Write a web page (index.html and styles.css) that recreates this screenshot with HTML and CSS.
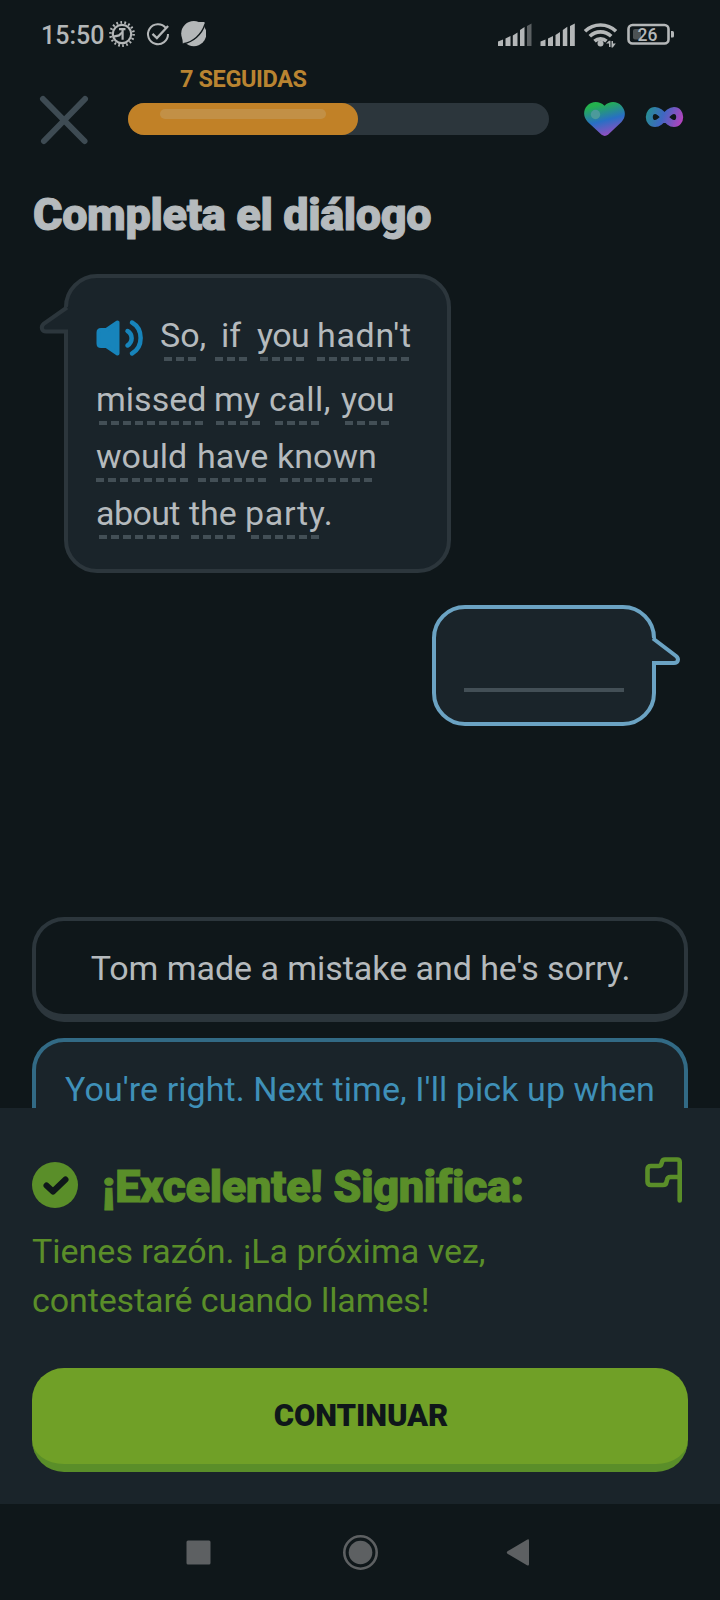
FILE: index.html
```html
<!DOCTYPE html>
<html lang="es">
<head>
<meta charset="utf-8">
<title>Completa el diálogo</title>
<link rel="stylesheet" href="styles.css">
</head>
<body>
<div class="screen">
  <header class="status">
    <span class="clock">15:50</span>
    <svg class="status-left" width="100" height="32" viewBox="106 18 100 32" fill="none" stroke="#b4b7b8">
      <circle cx="122" cy="34" r="9.2" stroke-width="2.2"/>
      <circle cx="122" cy="34" r="11.6" stroke-width="2.6" stroke-dasharray="1.7 2.35"/>
      <path d="M119 29.2h6.500M122.600 29.200v10.500" stroke-width="2.200"/>
      <path d="M113.500 36.600l5.500-1.200 3.400-3.200" stroke-width="2.200"/>
      <path d="M165.8 27.9a10 10 0 1 0 2.2 6.1" stroke-width="2"/>
      <path d="M152.500 33.800l4.400 4.200 11.200-12" stroke-width="2.300"/>
      <circle cx="193.800" cy="33.600" r="12.600" fill="#b4b7b8" stroke="none"/>
      <path d="M198 22l6.500 0 .3 6zM182.300 37l.5 6.500 6.500-1z" fill="#b4b7b8" stroke="none"/>
      <path d="M183.500 43.800c9-2 18-8.500 21.500-19.500" stroke="#0f171a" stroke-width="1.400"/>
    </svg>
    <svg class="status-right" width="184" height="32" viewBox="494 18 184 32" fill="#b4b7b8">
      <path d="M498 41.500l5-2V46h-5zM505.500 38.500l5-2.500v10h-5zM512.800 35.500l4.700-3V46h-4.700zM520 30l4.500-3V46H520z"/>
      <path d="M527 26l4.500-2.500V46H527z" fill="#5b6062"/>
      <path d="M540.500 41.500l5-2V46h-5zM548 38.500l5-2.500v10h-5zM555.500 35l4.500-3V46h-4.500zM562.800 30l4.500-3.200V46h-4.500zM570 26l4.800-2.500V46H570z"/>
      <g fill="none" stroke="#b4b7b8" stroke-width="3.600">
        <path d="M585 31.200a22.500 22.500 0 0 1 31 0M589.800 36.200a15.500 15.500 0 0 1 21.400 0M594.500 41.200a9 9 0 0 1 12 0"/>
      </g>
      <circle cx="600.500" cy="43.500" r="3"/>
      <path d="M606 43.500l3-2.800h1.500V47H609v-3.500zM615.800 43.500l-3 4h-1.300V41h1.500v2.500z"/>
      <rect x="628.500" y="25" width="40" height="18.500" rx="4" fill="none" stroke="#b4b7b8" stroke-width="2.600"/>
      <rect x="633" y="29" width="8" height="10.500" rx="2" fill="#4c5254"/>
      <path d="M671 31h1.500a1.500 1.500 0 0 1 1.500 1.500v3.500a1.500 1.500 0 0 1-1.500 1.500H671z"/>
      <text class="battery" x="637.500" y="40.500">26</text>
    </svg>
  </header>

  <div class="top">
    <svg class="close" width="56" height="56" viewBox="36 92 56 56" fill="none" stroke="#3e4b53" stroke-width="6" stroke-linecap="round"><path d="M43 99l41.500 42M85 99l-41 42"/></svg>
    <div class="progress-wrap">
      <div class="streak">7 SEGUIDAS</div>
      <div class="progress"><div class="fill"><div class="shine"></div></div></div>
    </div>
    <svg class="badges" width="110" height="48" viewBox="580 96 110 48">
      <defs>
        <linearGradient id="hg" x1=".3" y1="0" x2=".62" y2="1"><stop offset=".08" stop-color="#24b24e"/><stop offset=".55" stop-color="#286fc4"/><stop offset="1" stop-color="#9b4cc0"/></linearGradient>
        <linearGradient id="ig" gradientUnits="userSpaceOnUse" x1="646" y1="110" x2="683" y2="124"><stop offset="0" stop-color="#24918f"/><stop offset=".45" stop-color="#3f67c2"/><stop offset="1" stop-color="#bf40bd"/></linearGradient>
      </defs>
      <path fill="url(#hg)" d="M604.500 105.800c5-5 12.500-4.800 17 0 4.500 5 4.500 11.500 0 16.200l-13.500 12.800q-3.200 2.300-6.400 0L587.800 122c-4.500-4.700-5-11.500-.6-16.200 4.500-4.800 12.300-5 17.300 0z"/>
      <circle cx="595.500" cy="114.500" r="4.700" fill="#4c9a9b"/>
      <path d="M664.500 117c-3.600-4-6-6.600-9.500-6.600-3.500 0-5.700 3-5.700 6.600s2.200 6.600 5.700 6.600c3.500 0 5.900-2.600 9.500-6.600s6-6.600 9.500-6.600c3.500 0 5.700 3 5.700 6.600s-2.200 6.600-5.700 6.600c-3.500 0-5.900-2.600-9.500-6.600z" fill="none" stroke="url(#ig)" stroke-width="7"/>
    </svg>
  </div>

  <main class="lesson">
    <h1 class="title">Completa el diálogo</h1>
    <div class="bubble bubble-in">
      <svg class="tail tail-in" width="32" height="36" viewBox="38 302 32 36"><path d="M70 305.500L66 308 44 323.500c-4 3.500-2 8 2 8h20.500H70z" fill="#1a242a"/><path d="M67 307.500L44 323.500c-4 3.500-2 8 2 8h22" fill="none" stroke="#2c363c" stroke-width="4"/></svg>
      <div class="line line-first">
        <svg class="speaker" width="48" height="38" viewBox="96 319 48 38" fill="none" stroke="#1784bb" stroke-width="4.500" stroke-linecap="round"><path d="M101 330h5.500l11-7.500v31L106.500 346H101q-2.500 0-2.500-2.500v-11q0-2.500 2.500-2.500z" fill="#1784bb" stroke-width="4" stroke-linejoin="round"/><path d="M127.500 331c5.500 3.500 5.500 11 0 14.500M132 322.500c11.500 6.500 11.500 24.500 0 31"/></svg>
        <span class="word w-so">So,</span><span class="word w-if">if</span><span class="word w-you1">you</span><span class="word w-hadnt">hadn't</span>
      </div>
      <div class="line"><span class="word w-missed">missed</span><span class="word w-my">my</span><span class="word w-call">call,</span><span class="word w-you2">you</span></div>
      <div class="line line-third"><span class="word w-would">would</span><span class="word w-have">have</span><span class="word w-known">known</span></div>
      <div class="line"><span class="word w-about">about</span><span class="word w-the">the</span><span class="word w-party">party.</span></div>
    </div>
    <div class="bubble bubble-out">
      <svg class="tail tail-out" width="32" height="36" viewBox="650 634 32 36"><path d="M650 636.500l4 3 22 16.500c3.500 3 2 7-2 7h-20H650z" fill="#1a242a"/><path d="M653 638.500L676 656c3.500 3 2 7-2 7h-22" fill="none" stroke="#6ba3c3" stroke-width="4"/></svg>
      <div class="blank"></div>
    </div>
    <div class="options">
      <button class="option"><span class="opt-a">Tom made a mistake and he's sorry.</span></button>
      <button class="option selected"><span class="opt-b">You're right. Next time, I'll pick up when</span></button>
    </div>
  </main>

  <section class="feedback">
    <div class="feedback-head">
      <svg width="46" height="46" viewBox="0 0 46 46"><circle cx="23" cy="23" r="23" fill="#5a8e29"/><path d="M14.500 23.500l6.500 6 12.500-12" fill="none" stroke="#0f171a" stroke-width="6" stroke-linecap="round" stroke-linejoin="round"/></svg>
      <h2>¡Excelente! Significa:</h2>
      <svg class="flag" width="38" height="48" viewBox="645 1157 38 48" fill="none" stroke="#5a8e29" stroke-width="4.600" stroke-linecap="round" stroke-linejoin="round"><path d="M679.700 1200.500V1162q0-2.500-2.500-2.500H665q-2.500 0-3 2.500l-.5 1.500q-.5 2.500-3 2.500H651q-3.500 0-3.500 3.500v12q0 3.500 3.500 3.500h12q3 0 3.500-3l.5-2q.5-3 3.500-3h9"/></svg>
    </div>
    <p class="translation"><span class="tr-a">Tienes razón. ¡La próxima vez,</span><br><span class="tr-b">contestaré cuando llames!</span></p>
    <button class="continue"><span>CONTINUAR</span></button>
  </section>

  <nav class="nav">
    <svg width="720" height="96" viewBox="0 1504 720 96" fill="#5d6062"><rect x="186.500" y="1540.500" width="24" height="24" rx="1.500"/><circle cx="360.500" cy="1552.500" r="11.800"/><circle cx="360.500" cy="1552.500" r="16.200" fill="none" stroke="#5d6062" stroke-width="2.600"/><path d="M507.500 1551.200l19.500-11.500q2-1 2 1v23.500q0 2-2 1l-19.500-11.500q-1.500-1.200 0-2.500z"/></svg>
  </nav>
</div>
</body>
</html>
```
FILE: styles.css
```css
* { box-sizing: border-box; }
body { margin: 0; background: #0f171a; font-family: Roboto, "Liberation Sans", sans-serif; color: #b5babd; }
h1, h2, p { margin: 0; }
button { font: inherit; margin: 0; border: 0; }
svg { display: block; flex: none; }

.screen { width: 720px; height: 1600px; overflow: hidden; display: flex; flex-direction: column; }

.status { height: 66px; padding-left: 41px; display: flex; align-items: flex-start; padding-top: 18px; }
.clock { width: 65px; font-size: 25px; font-weight: 500; line-height: 35px; color: #b4b7b8; white-space: nowrap; }
.status-right { margin-left: 288px; }
.battery { font-size: 17.500px; font-weight: 500; }

.top { height: 112px; display: flex; padding-left: 36px; }
.close { margin-top: 26px; }
.progress-wrap { width: 421px; margin-left: 36px; }
.streak { margin-left: 52px; height: 37px; padding-top: 1px; font-size: 23.500px; line-height: 24px; font-weight: 700; letter-spacing: -.4px; color: #b98431; white-space: nowrap; }
.progress { height: 32px; border-radius: 16px; background: #2c363c; }
.fill { width: 230px; height: 32px; border-radius: 16px; background: #c18127; padding: 6px 32px; }
.shine { height: 10px; border-radius: 5px; background: #c29046; }
.badges { margin: 30px 0 0 31px; }

.lesson { height: 930px; overflow: hidden; padding: 0 32px; display: flex; flex-direction: column; flex: none; }
.title { height: 96px; flex: none; padding: 10px 0 0 1px; font-size: 45px; line-height: 54px; font-weight: 900; letter-spacing: -.35px; white-space: nowrap; -webkit-text-stroke: 1px #b5babd; }

.bubble { position: relative; flex: none; border: 4px solid #2c363c; border-radius: 33px; background: #1a242a; }
.bubble-in { width: 387px; height: 299px; margin-left: 32px; padding: 37px 0 0 28px; }
.bubble-out { width: 224px; height: 121px; border-color: #6ba3c3; margin: 32px 0 0 400px; padding: 79px 28px 0; }
.tail { position: absolute; }
.tail-in { left: -30px; top: 24px; }
.tail-out { right: -30px; top: 25px; }
.blank { height: 4px; background: #434f56; }

.line { display: flex; height: 57px; padding-left: 3px; font-size: 34px; line-height: 41px; white-space: nowrap; }
.line-first { height: 64px; padding-left: 0; }
.line-third { padding-left: 0; }
.speaker { margin: 4px 20px 0 0; }
.word { height: 46px; background: repeating-linear-gradient(90deg, #434f56 0 8px, transparent 8px 12px) no-repeat 0 100%; }
.w-so { width: 51px; background-size: 32px 4px; text-indent: -4px; }
.w-if { width: 45px; background-size: 32px 4px; text-indent: 6px; }
.w-you1 { width: 57px; background-size: 44px 4px; text-indent: -3px; letter-spacing: -.6px; }
.w-hadnt { width: 92px; background-size: 92px 4px; letter-spacing: .7px; }
.w-missed { width: 117px; background-size: 104px 4px; text-indent: -3px; }
.w-my { width: 59px; background-size: 44px 4px; text-indent: -2px; }
.w-call { width: 70px; background-size: 44px 4px; text-indent: -6px; letter-spacing: .5px; }
.w-you2 { width: 46px; background-size: 44px 4px; text-indent: -4px; letter-spacing: -.2px; }
.w-would { width: 102px; background-size: 92px 4px; }
.w-have { width: 82px; background-size: 68px 4px; text-indent: -1px; }
.w-known { width: 94px; background-size: 92px 4px; text-indent: -3px; }
.w-about { width: 92px; background-size: 80px 4px; text-indent: -3px; letter-spacing: -.6px; }
.w-the { width: 60px; background-size: 44px 4px; text-indent: -2px; }
.w-party { width: 86px; background-size: 68px 4px; text-indent: -6px; letter-spacing: .7px; }

.options { margin-top: 191px; flex: none; display: flex; flex-direction: column; gap: 16px; }
.option { height: 105px; flex: none; padding: 0; border: 4px solid #2c363c; border-bottom-width: 8px; border-radius: 32px; background: #0f171a; color: #b5babd; font-size: 34px; line-height: 40px; white-space: nowrap; }
.option.selected { border-color: #326a85; background: #1a242a; color: #3f90b8; }
.opt-a { letter-spacing: -.05px; padding-left: 1px; }
.opt-b { letter-spacing: .08px; }

.feedback { height: 396px; flex: none; background: #1a242a; color: #5a8e29; padding: 49px 32px 32px; display: flex; flex-direction: column; }
.feedback-head { display: flex; height: 68px; }
.feedback-head > svg:first-child { margin-top: 5px; }
.feedback-head h2 { width: 543px; margin-left: 24px; padding-top: 2px; font-size: 45px; line-height: 56px; font-weight: 900; letter-spacing: -.33px; white-space: nowrap; -webkit-text-stroke: 1px #5a8e29; }
.translation { height: 143px; padding-top: 2px; font-size: 34px; line-height: 49px; white-space: nowrap; }
.tr-b { letter-spacing: -.1px; }
.continue { height: 104px; padding: 0 0 2px 2px; border-bottom: 8px solid #5a8e29; border-radius: 32px; background: #70a027; color: #0f171a; font-size: 31px; font-weight: 900; letter-spacing: -.1px; }
.nav { height: 96px; }
```
